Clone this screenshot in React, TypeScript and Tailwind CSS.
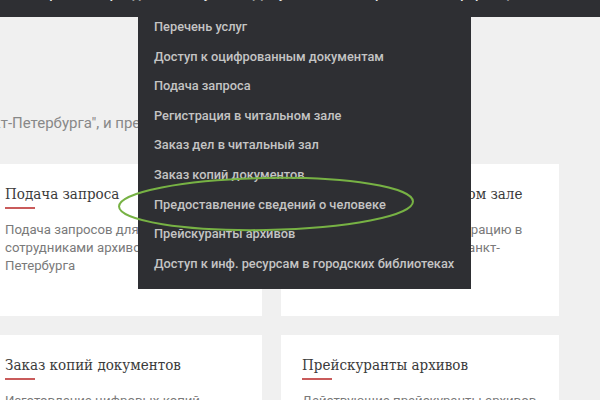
const menuItems = [
  "Перечень услуг",
  "Доступ к оцифрованным документам",
  "Подача запроса",
  "Регистрация в читальном зале",
  "Заказ дел в читальный зал",
  "Заказ копий документов",
  "Предоставление сведений о человеке",
  "Прейскуранты архивов",
  "Доступ к инф. ресурсам в городских библиотеках",
];

type Card = { title: string; lines: string[] };

const cards: Card[] = [
  {
    title: "Подача запроса",
    lines: ["Подача запросов для исполнения их", "сотрудниками архивов Санкт-", "Петербурга"],
  },
  {
    title: "Регистрация в читальном зале",
    lines: ["Вам следует пройти регистрацию в", "читальном зале архивов Санкт-", "Петербурга"],
  },
  {
    title: "Заказ копий документов",
    lines: ["Изготовление цифровых копий", "документов архивов"],
  },
  {
    title: "Прейскуранты архивов",
    lines: ["Действующие прейскуранты архивов", "Санкт-Петербурга"],
  },
];

const ServiceCard = ({ card }: { card: Card }) => (
  <div className="h-[152px] bg-white px-[21px] pt-[18px]">
    <h3 className="whitespace-nowrap font-['DejaVu_Serif_Condensed','DejaVu_Serif',serif] text-[15px] leading-[24px] text-[#3a3a3a] font-stretch-condensed">
      {card.title}
    </h3>
    <div className="mt-[1px] h-[2px] w-[30px] bg-[#c95b5b]" />
    <p className="mt-[12px] text-[13.2px] leading-[18px] text-[#7a7a7a]">
      {card.lines.map((l) => (
        <span key={l} className="block whitespace-nowrap">
          {l}
        </span>
      ))}
    </p>
  </div>
);

export default function App() {
  return (
    <div className="relative h-[400px] w-[600px] overflow-hidden bg-[#f0f0f0] font-['Roboto',sans-serif]">
      {/* top navigation, mostly cut off */}
      <header className="h-[17px] overflow-hidden bg-[#2e2f33]">
        <div className="-mt-[17px] flex gap-[28px] whitespace-nowrap pl-[40px] text-[14px] font-medium leading-[20px] text-[#e8e8e8]">
          <span>Архивы и фонды</span>
          <span>Услуги</span>
          <span>Документы</span>
          <span>Справочная информация</span>
          <span>Контакты</span>
        </div>
      </header>

      <p className="-ml-[34px] mt-[96px] whitespace-nowrap text-[15px] leading-[20px] text-[#888888]">
        Санкт-Петербурга", и предоставляет доступ к услугам архивов
      </p>

      <div className="-ml-[16px] mt-[31px] grid grid-cols-[278px_278px] gap-[19px]">
        {cards.map((c) => (
          <ServiceCard key={c.title} card={c} />
        ))}
      </div>

      {/* dropdown menu */}
      <ul className="absolute left-[138px] top-[17px] w-[333px] bg-[#2e2f33] pb-[6px]">
        {menuItems.map((item) => (
          <li
            key={item}
            className="h-[29.6px] whitespace-nowrap pl-[16px] text-[12.8px] font-medium leading-[20px] text-[#c4c4c4]"
          >
            {item}
          </li>
        ))}
      </ul>

      {/* hand-drawn highlight */}
      <svg className="pointer-events-none absolute left-0 top-0" width="600" height="400">
        <ellipse
          cx="266"
          cy="204"
          rx="147"
          ry="26"
          fill="none"
          stroke="#77b244"
          strokeWidth="2"
          transform="rotate(-1 266 204)"
        />
      </svg>
    </div>
  );
}
